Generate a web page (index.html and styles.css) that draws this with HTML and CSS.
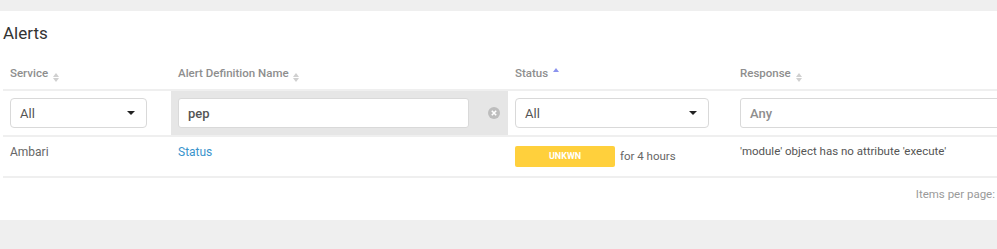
FILE: index.html
```html
<!DOCTYPE html>
<html lang="en">
<head>
<meta charset="UTF-8">
<title>Alerts</title>
<link rel="stylesheet" href="styles.css">
</head>
<body>
  <div class="alerts-panel">
    <h2 class="panel-title">Alerts</h2>
    <table class="alerts-table">
      <colgroup>
        <col class="col-service">
        <col class="col-name">
        <col class="col-status">
        <col class="col-response">
      </colgroup>
      <thead>
        <tr class="head-row">
          <th>Service <span class="sort"><i class="up"></i><i class="down"></i></span></th>
          <th>Alert Definition Name <span class="sort"><i class="up"></i><i class="down"></i></span></th>
          <th>Status <span class="sort active"><i class="up"></i></span></th>
          <th>Response <span class="sort"><i class="up"></i><i class="down"></i></span></th>
        </tr>
        <tr class="filter-row">
          <th>
            <div class="select-box">All <span class="caret"></span></div>
          </th>
          <th class="filter-active">
            <div class="filter-wrap">
              <div class="text-box value">pep</div>
              <span class="clear-btn">
                <svg width="12" height="12" viewBox="0 0 12 12">
                  <circle cx="6" cy="6" r="6" fill="#bdbdbd"/>
                  <path d="M3.8 3.8 L8.2 8.2 M8.2 3.8 L3.8 8.2" stroke="#fff" stroke-width="1.6"/>
                </svg>
              </span>
            </div>
          </th>
          <th>
            <div class="select-box status-select">All <span class="caret"></span></div>
          </th>
          <th>
            <div class="text-box placeholder">Any</div>
          </th>
        </tr>
      </thead>
      <tbody>
        <tr class="data-row">
          <td>Ambari</td>
          <td><a class="def-link" href="#">Status</a></td>
          <td><span class="badge-unknown">UNKWN</span><span class="since">for 4 hours</span></td>
          <td class="response">'module' object has no attribute 'execute'</td>
        </tr>
      </tbody>
    </table>
    <div class="pager">Items per page:</div>
  </div>
</body>
</html>
```

FILE: styles.css
```css
body {
  font-family: Roboto, "Liberation Sans", Arial, sans-serif;
  background-color: #efefef;
  margin: 0;
  padding: 0;
  overflow: hidden;
}

.alerts-panel {
  background-color: #fff;
  margin-top: 11px;
  height: 209px;
  padding-left: 3px;
  box-sizing: border-box;
  overflow: hidden;
}

.panel-title {
  margin: 0;
  padding-top: 11px;
  font-size: 17px;
  font-weight: 400;
  line-height: 22px;
  color: #333;
}

.alerts-table {
  width: 1040px;
  border-collapse: collapse;
  table-layout: fixed;
  margin-top: 22px;
}

.col-service { width: 168px; }
.col-name { width: 337px; }
.col-status { width: 225px; }
.col-response { width: 310px; }

.head-row th {
  text-align: left;
  font-size: 11.5px;
  font-weight: 500;
  color: #8e8e8e;
  padding: 0 7px;
  height: 23px;
  vertical-align: top;
  border-bottom: 2px solid #efefef;
}

.sort {
  display: inline-flex;
  flex-direction: column;
  gap: 1px;
  vertical-align: 0;
  margin-left: 2px;
}

.sort i {
  display: block;
  width: 0;
  height: 0;
  border-left: 3.5px solid transparent;
  border-right: 3.5px solid transparent;
}

.sort .up {
  border-bottom: 4px solid #d0d0d0;
}

.sort .down {
  border-top: 4px solid #d0d0d0;
}

.sort.active {
  vertical-align: 5px;
}

.sort.active .up {
  border-bottom-color: #8b93ee;
}

.filter-row th {
  padding: 7px;
  border-bottom: 2px solid #efefef;
  font-weight: 400;
  text-align: left;
}

.filter-row th.filter-active {
  background-color: #e6e6e6;
}

.select-box {
  height: 30px;
  width: 137px;
  box-sizing: border-box;
  border: 1px solid #d9d9d9;
  border-radius: 4px;
  background-color: #fff;
  padding: 0 9px;
  font-size: 13px;
  color: #555;
  display: flex;
  align-items: center;
  justify-content: space-between;
}

.status-select {
  width: 194px;
}

.caret {
  width: 0;
  height: 0;
  border-left: 4px solid transparent;
  border-right: 4px solid transparent;
  border-top: 4px solid #222;
  margin-right: 2px;
}

.filter-wrap {
  display: flex;
  align-items: center;
}

.text-box {
  height: 30px;
  box-sizing: border-box;
  border: 1px solid #d9d9d9;
  border-radius: 3px;
  background-color: #fff;
  padding: 0 9px;
  font-size: 13px;
  font-weight: 500;
  display: flex;
  align-items: center;
}

.filter-wrap .text-box {
  width: 291px;
}

.text-box.value {
  color: #555;
}

.text-box.placeholder {
  color: #8e8e8e;
  width: 300px;
}

.clear-btn {
  margin-left: 19px;
  display: flex;
}

.data-row td {
  padding: 8px 7px 0 7px;
  height: 31px;
  vertical-align: top;
  font-size: 12px;
  color: #666;
  border-bottom: 2px solid #efefef;
}

.def-link {
  color: #3a94cc;
  text-decoration: none;
}

.badge-unknown {
  display: inline-block;
  width: 100px;
  height: 21px;
  line-height: 21px;
  text-align: center;
  background-color: #ffd03c;
  border-radius: 2px;
  color: #fff;
  font-size: 9px;
  font-weight: 700;
  vertical-align: middle;
  margin-top: 1px;
}

.since {
  margin-left: 5px;
  vertical-align: middle;
  font-size: 11.5px;
  color: #666;
}

.data-row td.response {
  color: #555;
  font-size: 11.5px;
  padding-top: 7px;
}

.pager {
  width: 992px;
  text-align: right;
  font-size: 11.5px;
  color: #9a9a9a;
  padding-top: 9px;
}
```
